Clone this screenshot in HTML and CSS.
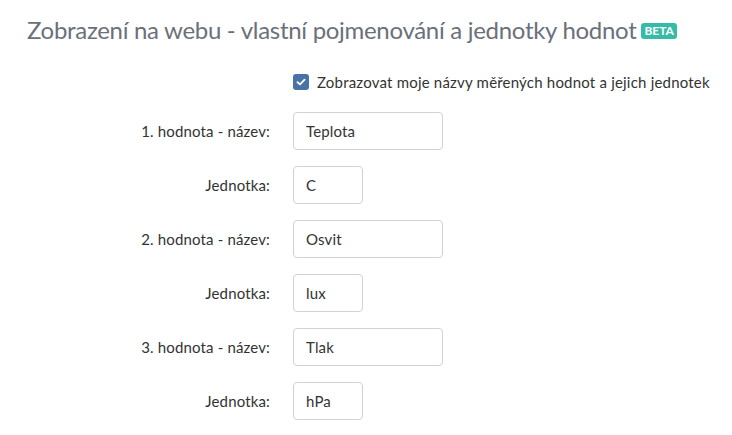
FILE: index.html
```html
<!DOCTYPE html>
<html lang="cs">
<head>
<meta charset="utf-8">
<link rel="stylesheet" href="styles.css">
</head>
<body>
<div class="page">
  <h2 class="title">Zobrazení na webu - vlastní pojmenování a jednotky hodnot <span class="badge">BETA</span></h2>
  <div class="form">
    <div class="label"></div>
    <label class="check">
      <span class="box"><svg width="10" height="8" viewBox="0 0 10 8"><path d="M1.5 4.2 L4 6.4 L8.6 1.6" fill="none" stroke="#fff" stroke-width="1.8" stroke-linecap="round" stroke-linejoin="round"/></svg></span>
      Zobrazovat moje názvy měřených hodnot a jejich jednotek
    </label>

    <div class="label">1. hodnota - název:</div>
    <div class="field"><input class="input wide" value="Teplota"></div>
    <div class="label">Jednotka:</div>
    <div class="field"><input class="input narrow" value="C"></div>

    <div class="label">2. hodnota - název:</div>
    <div class="field"><input class="input wide" value="Osvit"></div>
    <div class="label">Jednotka:</div>
    <div class="field"><input class="input narrow" value="lux"></div>

    <div class="label">3. hodnota - název:</div>
    <div class="field"><input class="input wide" value="Tlak"></div>
    <div class="label">Jednotka:</div>
    <div class="field"><input class="input narrow" value="hPa"></div>
  </div>
</div>
</body>
</html>
```
FILE: styles.css
```css
html, body { margin: 0; padding: 0; background: #fff; }
body { font-family: Lato, "Open Sans", sans-serif; color: #333; }
.page { padding: 14px 0 0 27px; }
.title {
  margin: 0;
  font-weight: 400;
  font-size: 24px;
  line-height: 32px;
  color: #6b707a;
  letter-spacing: -0.3px;
  display: flex;
  align-items: center;
  white-space: nowrap;
}
.badge {
  display: inline-block;
  margin-left: 5px;
  background: #36bba9;
  color: #fff;
  font-size: 12px;
  font-weight: 700;
  line-height: 16px;
  height: 16px;
  padding: 0 3px;
  border-radius: 3px;
  letter-spacing: 0;
  margin-top: 2px;
}
.form {
  display: grid;
  grid-template-columns: 243px auto;
  column-gap: 23px;
  row-gap: 16px;
  margin-top: 24px;
  align-items: center;
}
.label {
  text-align: right;
  font-size: 15px;
  letter-spacing: 0.15px;
  color: #333;
}
.check {
  display: flex;
  align-items: center;
  font-size: 15px;
  letter-spacing: 0.2px;
  color: #333;
  margin-bottom: 2px;
  height: 24px;
}
.box {
  width: 16px; height: 16px;
  background: #4a72a6;
  border-radius: 3px;
  display: inline-flex;
  align-items: center;
  justify-content: center;
  margin-right: 8px;
}
.input {
  box-sizing: border-box;
  height: 38px;
  border: 1px solid #d2d2d2;
  border-radius: 4px;
  padding: 0 12px;
  font-family: Lato, "Open Sans", sans-serif;
  font-size: 15px;
  letter-spacing: 0.15px;
  color: #333;
  background: #fff;
  display: block;
}
.wide { width: 150px; }
.narrow { width: 70px; }
```
